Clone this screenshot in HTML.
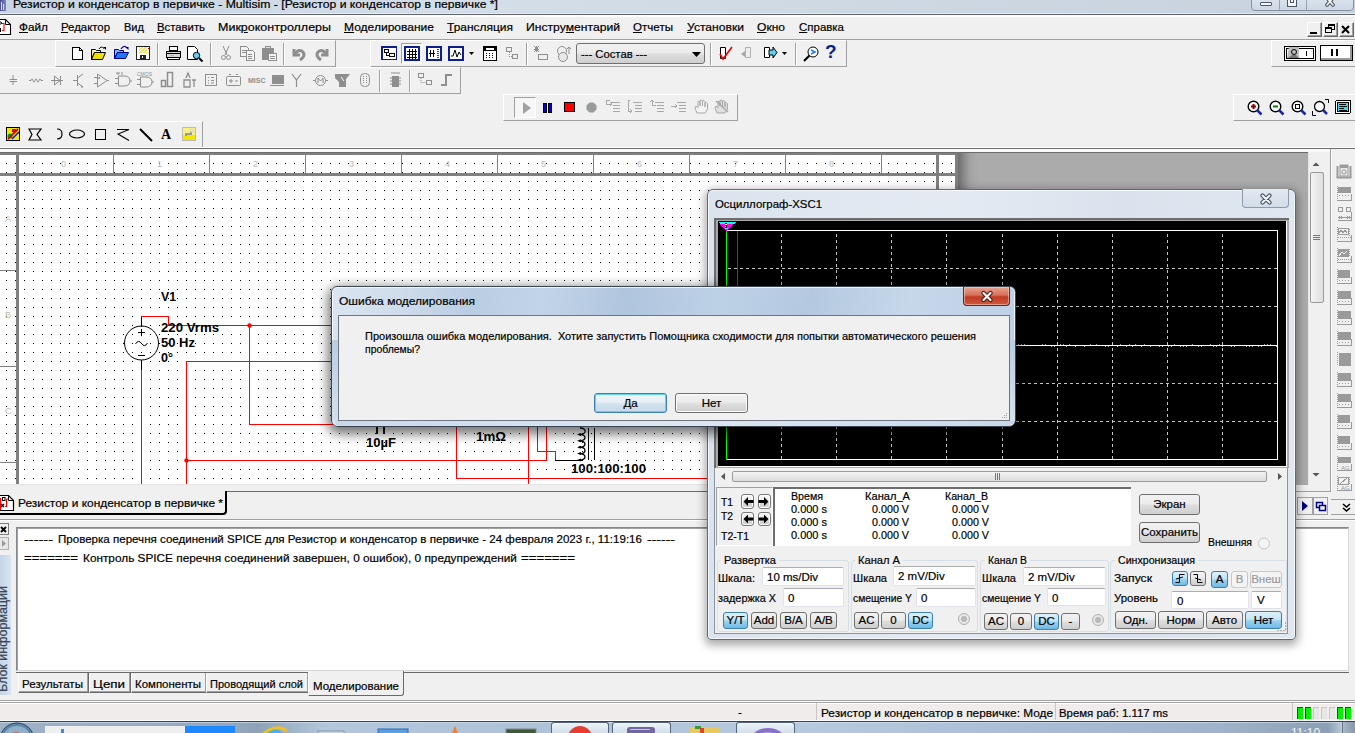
<!DOCTYPE html><html><head><meta charset="utf-8"><style>
*{margin:0;padding:0;box-sizing:border-box}
html,body{width:1355px;height:733px;overflow:hidden;background:#f0f0f0;font-family:"Liberation Sans",sans-serif;font-size:11.5px;color:#000}
div{position:absolute}
.t{white-space:pre;line-height:14px;transform-origin:0 0;-webkit-text-stroke:0.2px currentColor}
u{text-decoration:underline;text-underline-offset:1px;text-decoration-thickness:1px}
svg{position:absolute;overflow:visible}
.b{font-weight:bold}
</style></head><body><div style="left:0px;top:0px;width:1355px;height:13px;background:linear-gradient(90deg,#c9d5e2 0%,#d4dee9 35%,#cfd9e4 60%,#c7d2de 100%)"></div>
<div style="left:0px;top:13px;width:1355px;height:1px;background:#e4eaf1"></div>
<div style="left:0px;top:14px;width:1355px;height:1px;background:#62676e"></div>
<div style="left:0px;top:15px;width:1355px;height:2px;background:#fcfcfc"></div>
<div class="t" style="left:13px;top:-3px;transform:scaleX(1.0607);">Резистор и конденсатор в первичке - Multisim - [Резистор и конденсатор в первичке *]</div>
<div style="left:0px;top:0px;width:6px;height:11px;background:linear-gradient(90deg,#4a4f90,#8088c8)"></div>
<div style="left:1px;top:2px;width:1px;height:8px;background:#d8dcf0"></div>
<div style="left:3px;top:4px;width:1px;height:6px;background:#d8dcf0"></div>
<div style="left:1251px;top:-6px;width:103px;height:17px;border:1px solid #8592a2;border-radius:0 0 4px 4px;background:linear-gradient(#dfe7f0,#cdd8e4)"></div>
<div style="left:1279px;top:0px;width:1px;height:10px;background:#96a2b0"></div>
<div style="left:1306px;top:0px;width:1px;height:10px;background:#96a2b0"></div>
<div style="left:1260px;top:2px;width:12px;height:4px;border:1px solid #4c5666;background:#f4f6f8;border-radius:1px"></div>
<div style="left:1287px;top:0px;width:10px;height:7px;border:1px solid #4c5666;background:#f4f6f8;border-top:none"></div>
<div style="left:1290px;top:0px;width:4px;height:3px;border:1px solid #4c5666;border-top:none"></div>
<svg style="left:1322px;top:-2px" width="16" height="10"><path d="M4,-1 L8,3.5 L5,7 M12,-1 L8,3.5 L11,7" stroke="#4c5666" stroke-width="3.6" fill="none" stroke-linecap="round"/><path d="M4,-1 L8,3.5 L5,7 M12,-1 L8,3.5 L11,7" stroke="#f4f6f8" stroke-width="1.6" fill="none" stroke-linecap="round"/></svg>
<div class="t" style="left:19px;top:20px;transform:scaleX(1.0254);"><u>Ф</u>айл</div>
<div class="t" style="left:61px;top:20px;transform:scaleX(0.9896);"><u>Р</u>едактор</div>
<div class="t" style="left:124px;top:20px;transform:scaleX(0.9610);">Вид</div>
<div class="t" style="left:157px;top:20px;transform:scaleX(0.9846);"><u>В</u>ставить</div>
<div class="t" style="left:218px;top:20px;transform:scaleX(1.0862);">Мик<u>р</u>оконтроллеры</div>
<div class="t" style="left:344px;top:20px;transform:scaleX(1.0458);"><u>М</u>оделирование</div>
<div class="t" style="left:447px;top:20px;transform:scaleX(1.0401);"><u>Т</u>рансляция</div>
<div class="t" style="left:526px;top:20px;transform:scaleX(1.0567);">Инстру<u>м</u>ентарий</div>
<div class="t" style="left:633px;top:20px;transform:scaleX(1.0059);"><u>О</u>тчеты</div>
<div class="t" style="left:687px;top:20px;transform:scaleX(1.0528);"><u>У</u>становки</div>
<div class="t" style="left:757px;top:20px;transform:scaleX(1.0473);"><u>О</u>кно</div>
<div class="t" style="left:799px;top:20px;transform:scaleX(0.9972);"><u>С</u>правка</div>
<svg style="left:0;top:19px" width="12" height="17"><path d="M-2,0.5 H5.5 L10.5,5.5 V15.5 H-2" fill="#fff" stroke="#000" stroke-width="1.1"/><path d="M5.5,0.5 V5.5 H10.5" fill="none" stroke="#000"/><path d="M2,4.5 H4 V11.5 H2" stroke="#f00" stroke-width="1.1" fill="none"/><path d="M-1,2 L2,4 L-1,6" stroke="#000" fill="none"/><rect x="-1" y="9" width="2" height="4" fill="#000"/></svg>
<div style="left:1307px;top:22px;width:15px;height:15px;background:#f0f0f0;border-top:1px solid #fff;border-left:1px solid #fff;border-right:1px solid #696969;border-bottom:1px solid #696969;box-shadow:inset -1px -1px 0 #a0a0a0"></div>
<div style="left:1323px;top:22px;width:15px;height:15px;background:#f0f0f0;border-top:1px solid #fff;border-left:1px solid #fff;border-right:1px solid #696969;border-bottom:1px solid #696969;box-shadow:inset -1px -1px 0 #a0a0a0"></div>
<div style="left:1339px;top:22px;width:15px;height:15px;background:#f0f0f0;border-top:1px solid #fff;border-left:1px solid #fff;border-right:1px solid #696969;border-bottom:1px solid #696969;box-shadow:inset -1px -1px 0 #a0a0a0"></div>
<div style="left:1310px;top:32px;width:7px;height:2px;background:#000"></div>
<svg style="left:1325px;top:24px" width="12" height="11"><rect x="3.5" y="0.5" width="6" height="5" fill="none" stroke="#000"/><rect x="3.5" y="1" width="6" height="1" fill="#000"/><rect x="0.5" y="3.5" width="6" height="5" fill="#f0f0f0" stroke="#000"/><rect x="0.5" y="4" width="6" height="1" fill="#000"/></svg>
<svg style="left:1341px;top:25px" width="10" height="9"><path d="M1,1 L8,8 M8,1 L1,8" stroke="#000" stroke-width="2"/></svg>
<div style="left:0px;top:39px;width:1355px;height:1px;background:#a0a0a0"></div>
<div style="left:55px;top:40px;width:281px;height:27px;border-top:1px solid #fff;border-left:1px solid #fff;border-bottom:1px solid #a0a0a0;border-right:1px solid #a0a0a0"></div>
<div style="left:370px;top:40px;width:477px;height:27px;border-top:1px solid #fff;border-left:1px solid #fff;border-bottom:1px solid #a0a0a0;border-right:1px solid #a0a0a0"></div>
<div style="left:1271px;top:40px;width:90px;height:27px;border-top:1px solid #fff;border-left:1px solid #fff;border-bottom:1px solid #a0a0a0;border-right:1px solid #a0a0a0"></div>
<div style="left:-2px;top:67px;width:463px;height:27px;border-top:1px solid #fff;border-left:1px solid #fff;border-bottom:1px solid #a0a0a0;border-right:1px solid #a0a0a0"></div>
<div style="left:503px;top:94px;width:235px;height:27px;border-top:1px solid #fff;border-left:1px solid #fff;border-bottom:1px solid #a0a0a0;border-right:1px solid #a0a0a0"></div>
<div style="left:1233px;top:94px;width:130px;height:27px;border-top:1px solid #fff;border-left:1px solid #fff;border-bottom:1px solid #a0a0a0;border-right:1px solid #a0a0a0"></div>
<div style="left:-2px;top:121px;width:205px;height:27px;border-top:1px solid #fff;border-left:1px solid #fff;border-bottom:1px solid #a0a0a0;border-right:1px solid #a0a0a0"></div>
<div style="left:157px;top:43px;width:1px;height:22px;background:#a0a0a0"></div>
<div style="left:158px;top:43px;width:1px;height:22px;background:#fff"></div>
<div style="left:210px;top:43px;width:1px;height:22px;background:#a0a0a0"></div>
<div style="left:211px;top:43px;width:1px;height:22px;background:#fff"></div>
<div style="left:283px;top:43px;width:1px;height:22px;background:#a0a0a0"></div>
<div style="left:284px;top:43px;width:1px;height:22px;background:#fff"></div>
<div style="left:526px;top:43px;width:1px;height:22px;background:#a0a0a0"></div>
<div style="left:527px;top:43px;width:1px;height:22px;background:#fff"></div>
<div style="left:710px;top:43px;width:1px;height:22px;background:#a0a0a0"></div>
<div style="left:711px;top:43px;width:1px;height:22px;background:#fff"></div>
<div style="left:795px;top:43px;width:1px;height:22px;background:#a0a0a0"></div>
<div style="left:796px;top:43px;width:1px;height:22px;background:#fff"></div>
<div style="left:379px;top:70px;width:1px;height:22px;background:#a0a0a0"></div>
<div style="left:380px;top:70px;width:1px;height:22px;background:#fff"></div>
<div style="left:409px;top:70px;width:1px;height:22px;background:#a0a0a0"></div>
<div style="left:410px;top:70px;width:1px;height:22px;background:#fff"></div>
<svg style="left:72px;top:47px" width="12" height="14" shape-rendering="crispEdges"><path d="M0.5,0.5 H7.5 L10.5,3.5 V12.5 H0.5 Z" fill="#fff" stroke="#000"/><path d="M7.5,0.5 V3.5 H10.5" fill="none" stroke="#000"/></svg>
<svg style="left:91px;top:46px" width="17" height="15"><path d="M0.5,3.5 H4.5 L5.5,4.5 H9.5 V6.5 H3.5 L0.5,13.5 Z" fill="#fff7a0" stroke="#000"/><path d="M0.5,13.5 L3.5,6.5 H14.5 L11.5,13.5 Z" fill="#f0e000" stroke="#000"/><path d="M8,3 Q10,-0.5 13,2.5" fill="none" stroke="#000"/><path d="M12,1 H15 V4 Z" fill="#000"/></svg>
<svg style="left:114px;top:45px" width="16" height="15"><path d="M0.5,4.5 H4.5 L5.5,5.5 H9.5 V7.5 H3.5 L0.5,13.5 Z" fill="#7fb4f5" stroke="#00008b"/><path d="M0.5,13.5 L3.5,7.5 H14.5 L11.5,13.5 Z" fill="#1e78f0" stroke="#00008b"/><path d="M7,4 Q10,-0.5 13,3" fill="none" stroke="#00008b" stroke-width="1.2"/><path d="M11.5,2 H14.5 V5 Z" fill="#00008b"/></svg>
<svg style="left:136px;top:46px" width="15" height="15" shape-rendering="crispEdges"><rect x="0.5" y="0.5" width="13" height="13" fill="#fff" stroke="#222"/><rect x="3" y="1" width="8" height="6" fill="#f4ea3a"/><path d="M3,3 L5,1 M3,6 L8,1 M6,7 L11,2 M9,7 L11,5" stroke="#fff"/><rect x="4" y="9" width="6" height="4" fill="#222"/><rect x="6" y="10" width="1" height="2" fill="#fff"/><rect x="12" y="2" width="1" height="1" fill="#e00"/></svg>
<svg style="left:165px;top:46px" width="17" height="15" shape-rendering="crispEdges"><path d="M4.5,0.5 H12.5 V4.5 H4.5 Z" fill="#fff" stroke="#000"/><path d="M1.5,5.5 H15.5 V11.5 H1.5 Z" fill="#d8d8d8" stroke="#000"/><rect x="1" y="7" width="15" height="1" fill="#000"/><rect x="5" y="9" width="4" height="1" fill="#e0c000"/><path d="M2.5,11.5 V13.5 H14.5 V11.5" fill="#fff" stroke="#000"/></svg>
<svg style="left:187px;top:46px" width="17" height="16"><path d="M0.5,0.5 H7.5 L10.5,3.5 V13.5 H0.5 Z" fill="#fff" stroke="#000"/><circle cx="9.5" cy="9.5" r="3.2" fill="#5fd0f0" stroke="#000"/><path d="M12,12 L15.5,15.5" stroke="#000" stroke-width="2"/></svg>
<svg style="left:221px;top:46px" width="10" height="15"><path d="M2,0 L6,9 M8,0 L4,9" stroke="#8e8e8e"/><circle cx="2.5" cy="11.5" r="2" fill="none" stroke="#8e8e8e"/><circle cx="7.5" cy="11.5" r="2" fill="none" stroke="#8e8e8e"/></svg>
<svg style="left:240px;top:46px" width="16" height="15" shape-rendering="crispEdges"><path d="M0.5,0.5 H6.5 L8.5,2.5 V10.5 H0.5 Z" fill="#f4f4f4" stroke="#8e8e8e"/><path d="M6.5,4.5 H12.5 L14.5,6.5 V14.5 H6.5 Z" fill="#f4f4f4" stroke="#8e8e8e"/><path d="M2,4 H6 M2,6 H6 M8,8 H12 M8,10 H12 M8,12 H12" stroke="#8e8e8e"/></svg>
<svg style="left:262px;top:46px" width="16" height="15" shape-rendering="crispEdges"><rect x="0" y="2" width="12" height="12" fill="#8e8e8e"/><rect x="3" y="0" width="6" height="3" fill="#8e8e8e"/><rect x="4" y="1" width="4" height="1" fill="#ddd"/><rect x="6.5" y="7.5" width="8" height="7" fill="#f4f4f4" stroke="#8e8e8e"/><path d="M8,10 H13 M8,12 H13" stroke="#8e8e8e"/></svg>
<svg style="left:291px;top:47px" width="16" height="14"><path d="M3,2 V8 H9" fill="none" stroke="#8e8e8e" stroke-width="3"/><path d="M4,7 Q8,1 12,5 Q15,9 9,13" fill="none" stroke="#8e8e8e" stroke-width="3"/></svg>
<svg style="left:314px;top:47px" width="16" height="14"><path d="M13,2 V8 H7" fill="none" stroke="#8e8e8e" stroke-width="3"/><path d="M12,7 Q8,1 4,5 Q1,9 7,13" fill="none" stroke="#8e8e8e" stroke-width="3"/></svg>
<svg style="left:381px;top:46px" width="16" height="15" shape-rendering="crispEdges"><rect x="0.5" y="0.5" width="15" height="13" fill="#fff" stroke="#0a1e8c" stroke-width="1"/><rect x="1" y="1" width="14" height="12" fill="none" stroke="#0a1e8c" stroke-width="1"/><rect x="3.5" y="3.5" width="4" height="3" fill="#fff" stroke="#000"/><rect x="8.5" y="7.5" width="5" height="3" fill="#fff" stroke="#000"/><path d="M5.5,6.5 V9.5 H8.5" stroke="#000" fill="none"/></svg>
<div style="left:401px;top:43px;width:21px;height:21px;border:1px solid #a0a0a0;border-right-color:#fff;border-bottom-color:#fff;background:#f6f6f6"></div>
<svg style="left:404px;top:46px" width="16" height="15" shape-rendering="crispEdges"><rect x="0.5" y="0.5" width="15" height="14" fill="#fff" stroke="#0a1e8c"/><rect x="1.5" y="1.5" width="13" height="12" fill="none" stroke="#0a1e8c"/><path d="M3,5.5 H13 M3,8.5 H13 M3,11.5 H13 M5.5,3 V13 M8.5,3 V13 M11.5,3 V13" stroke="#000"/></svg>
<svg style="left:426px;top:46px" width="16" height="15" shape-rendering="crispEdges"><rect x="0.5" y="0.5" width="15" height="14" fill="#fff" stroke="#0a1e8c"/><rect x="1.5" y="1.5" width="13" height="12" fill="none" stroke="#0a1e8c"/><path d="M4.5,4 V11 M7.5,4 V11 M3,7.5 H9" stroke="#000"/><path d="M11,3.5 H13 M11,5.5 H13 M11,7.5 H13 M11,9.5 H13 M11,11.5 H13" stroke="#e00"/></svg>
<svg style="left:448px;top:46px" width="16" height="15"><rect x="0.5" y="0.5" width="15" height="14" fill="#fff" stroke="#0a1e8c"/><rect x="1.5" y="1.5" width="13" height="12" fill="none" stroke="#0a1e8c"/><path d="M3,10 L5,10 L7,4 L9,11 L11,6 L13,9" stroke="#000" fill="none"/></svg>
<svg style="left:469px;top:52px" width="6" height="4"><path d="M0,0 H5 L2.5,3 Z" fill="#000"/></svg>
<svg style="left:483px;top:46px" width="15" height="15" shape-rendering="crispEdges"><rect x="0.5" y="0.5" width="13" height="14" fill="#fff" stroke="#000"/><rect x="1" y="1" width="12" height="4" fill="#000"/><rect x="3" y="2" width="8" height="2" fill="#fff"/><path d="M3,7.5 H4 M6,7.5 H7 M9,7.5 H10 M3,9.5 H4 M6,9.5 H7 M9,9.5 H10 M3,11.5 H4 M6,11.5 H7 M9,11.5 H10" stroke="#000"/></svg>
<svg style="left:506px;top:47px" width="13" height="13" shape-rendering="crispEdges"><rect x="0.5" y="0.5" width="5" height="4" fill="none" stroke="#8e8e8e"/><rect x="6.5" y="7.5" width="5" height="4" fill="none" stroke="#8e8e8e"/><path d="M3,5 V9 H6" stroke="#8e8e8e" fill="none" stroke-dasharray="1,1"/></svg>
<svg style="left:533px;top:46px" width="16" height="15" shape-rendering="crispEdges"><path d="M1,3 H6 M3.5,0 V6 M1,0 L6,6 M6,0 L1,6" stroke="#8e8e8e"/><rect x="5.5" y="8.5" width="9" height="5" fill="none" stroke="#8e8e8e"/></svg>
<svg style="left:556px;top:46px" width="17" height="16"><circle cx="6" cy="5" r="4.5" fill="none" stroke="#8e8e8e"/><circle cx="7" cy="11" r="4.5" fill="#e8e8e8" stroke="#8e8e8e"/><path d="M13,1 V8 M11,3 L13,1 L15,3" stroke="#8e8e8e" fill="none"/></svg>
<div style="left:576px;top:43px;width:129px;height:21px;border:1px solid #707070;border-radius:3px;background:linear-gradient(#f2f2f2 0%,#ebebeb 45%,#dddddd 55%,#cfcfcf 100%)"></div>
<div class="t" style="left:581px;top:47px;transform:scaleX(0.9782);">--- Состав ---</div>
<svg style="left:692px;top:52px" width="9" height="5"><path d="M0,0 H9 L4.5,5 Z" fill="#000"/></svg>
<svg style="left:718px;top:45px" width="16" height="17"><path d="M2.5,2.5 H7.5 V13.5 H2.5 Z" fill="#fff" stroke="#000"/><path d="M2,9 L5,14 L14,2" stroke="#e00" stroke-width="1.6" fill="none"/></svg>
<svg style="left:741px;top:47px" width="10" height="12"><path d="M4.5,0.5 H9.5 V10.5 H4.5 Z" fill="#eee" stroke="#b0b0b0"/><path d="M0,7 L4,4 V10 Z" fill="#a8a8a8"/></svg>
<svg style="left:764px;top:47px" width="14" height="12"><path d="M0.5,0.5 H5.5 V10.5 H0.5 Z" fill="#fff" stroke="#000"/><path d="M5,3 H9 V0 L13,5.5 L9,11 V8 H5 Z" fill="#5fd0f0" stroke="#000"/></svg>
<svg style="left:782px;top:52px" width="6" height="4"><path d="M0,0 H5 L2.5,3 Z" fill="#000"/></svg>
<svg style="left:803px;top:46px" width="16" height="16"><circle cx="10" cy="6" r="5" fill="#fff" stroke="#000"/><path d="M8,4 L12,6 L8,8" stroke="#1e78f0" fill="none" stroke-width="1.5"/><path d="M6.5,9.5 L1,15" stroke="#000" stroke-width="2.2"/></svg>
<div style="left:825px;top:41px;font:bold 19px/22px Liberation Sans;color:#0a1e8c">?</div>
<svg style="left:1284px;top:46px" width="32" height="15"><rect x="0.5" y="0.5" width="31" height="14" fill="#fff" stroke="#000"/><rect x="2.5" y="2.5" width="27" height="10" fill="none" stroke="#000"/><path d="M3,12 L5,1 H15 V12 Z" fill="#bdbdbd"/><circle cx="10" cy="6" r="2.5" fill="none" stroke="#000"/><path d="M4,12 L8,9 H12 L15,12 Z" fill="#777"/><rect x="22" y="5" width="1" height="5" fill="#000"/></svg>
<div style="left:1320px;top:45px;width:33px;height:16px;border:1px solid #000;background:#fff;box-shadow:inset -2px -2px 0 #9a9a9a"></div>
<div style="left:1331px;top:49px;width:2px;height:7px;background:#000"></div>
<div style="left:1336px;top:49px;width:2px;height:7px;background:#000"></div>
<svg style="left:9px;top:72px" width="17" height="17"><path d="M4,3 V7 M0.5,7.5 H8 M0.5,9.5 H8 M4,10 V13" stroke="#8e8e8e"/></svg>
<svg style="left:29px;top:72px" width="17" height="17"><path d="M0,8.5 H2 Q3,5 4,8.5 T6,8.5 T8,8.5 T10,8.5 T12,8.5 H14" stroke="#8e8e8e" fill="none" stroke-width="1"/></svg>
<svg style="left:51px;top:72px" width="17" height="17"><path d="M0,8.5 H12 M3.5,4 L9,8.5 L3.5,13 Z M9.5,4 V13" stroke="#8e8e8e" fill="none"/></svg>
<svg style="left:73px;top:72px" width="17" height="17"><path d="M0,8.5 H4 M4.5,3 V14 M4.5,6 L10,2 M4.5,11 L10,15 M8,13 L10,15 L8,15" stroke="#8e8e8e" fill="none"/></svg>
<svg style="left:94px;top:72px" width="17" height="17"><path d="M0,5.5 H3 M0,11.5 H3 M3.5,2 V15 L13,8.5 Z M13,8.5 H15 M5,5 V7 M4,6 H6" stroke="#8e8e8e" fill="none"/></svg>
<svg style="left:115px;top:72px" width="18" height="17"><path d="M3.5,4 H9 Q15,4 15,9 Q15,14 9,14 H3.5 Z M0,6.5 H3 M0,11.5 H3 M15,9 H17 M1,1 H5 M3,1 V3 M7,0 V3" stroke="#8e8e8e" fill="none"/></svg>
<svg style="left:137px;top:72px" width="18" height="17"><path d="M3.5,5 H9 Q15,5 15,10 Q15,15 9,15 H3.5 Z M0,7.5 H3 M0,12.5 H3 M15,10 H17" stroke="#8e8e8e" fill="none"/><text x="0" y="4" font-size="5" fill="#8e8e8e" font-family="Liberation Sans">CMOS</text></svg>
<svg style="left:161px;top:72px" width="13" height="17"><path d="M6.5,0.5 H11.5 V14.5 H6.5 Z M0.5,8.5 H4.5 V14.5 H0.5 Z" fill="none" stroke="#8e8e8e" stroke-width="1.5"/></svg>
<svg style="left:182px;top:72px" width="15" height="17"><path d="M4,6 L6,1 L8,6 M2,8 H8 V15 H2 Z M10,8 H14 M12,8 V15" stroke="#8e8e8e" fill="none" stroke-width="1.3"/></svg>
<svg style="left:205px;top:72px" width="12" height="17"><rect x="0.5" y="2.5" width="11" height="11" fill="none" stroke="#8e8e8e"/><path d="M3,5.5 H4 M3,8.5 H4 M3,11 H4 M6,5.5 H9 M6,8.5 H9 M6,11 H9" stroke="#8e8e8e"/></svg>
<svg style="left:226px;top:72px" width="16" height="17"><rect x="0.5" y="4.5" width="14" height="9" rx="1" fill="none" stroke="#8e8e8e"/><path d="M3,2.5 H5 M10,2.5 H12 M3,9 H7 M5,7 V11 M9,9 H12" stroke="#8e8e8e"/></svg>
<div style="left:248px;top:76px;font:bold 7px/9px Liberation Sans;color:#8e8e8e;letter-spacing:0px">MISC</div>
<svg style="left:270px;top:72px" width="15" height="17"><rect x="2" y="3" width="12" height="9" fill="#8e8e8e"/><path d="M0,13.5 H14" stroke="#8e8e8e"/></svg>
<svg style="left:292px;top:72px" width="10" height="17"><path d="M4.5,8 V15 M0,2 L4.5,8 L9,2" stroke="#8e8e8e" fill="none" stroke-width="1.2"/></svg>
<svg style="left:313px;top:72px" width="16" height="17"><circle cx="7.5" cy="8.5" r="5" fill="none" stroke="#8e8e8e"/><path d="M0,8.5 H2.5 M12.5,8.5 H15 M5,11 V6 L7.5,9 L10,6 V11" stroke="#8e8e8e" fill="none"/></svg>
<svg style="left:335px;top:72px" width="16" height="17"><path d="M0,2 H15 L11,7 V15 H4 V10 L0,6 Z" fill="#8e8e8e"/><path d="M6,5 L9,9" stroke="#fff"/></svg>
<svg style="left:359px;top:72px" width="12" height="17"><rect x="1.5" y="1.5" width="9" height="13" rx="4" fill="none" stroke="#8e8e8e"/><path d="M4.5,4 V12 M7.5,4 V12" stroke="#8e8e8e" stroke-dasharray="1,1"/></svg>
<svg style="left:390px;top:72px" width="12" height="17"><rect x="2" y="4" width="7" height="11" fill="#8e8e8e"/><path d="M0,6 H11 M0,9 H11 M0,12 H11 M1,1 H10" stroke="#8e8e8e"/></svg>
<svg style="left:418px;top:72px" width="15" height="17"><rect x="0.5" y="1.5" width="5" height="4" fill="none" stroke="#8e8e8e"/><rect x="8.5" y="8.5" width="5" height="4" fill="none" stroke="#8e8e8e"/><path d="M3,6 V10.5 H8" stroke="#8e8e8e" stroke-dasharray="1,1" fill="none"/></svg>
<svg style="left:441px;top:72px" width="12" height="17"><path d="M0,13 H5 V3 H11" stroke="#8e8e8e" stroke-width="2" fill="none"/></svg>
<div style="left:514px;top:97px;width:22px;height:21px;border:1px solid #a0a0a0;border-right-color:#fff;border-bottom-color:#fff;background:#f6f6f6"></div>
<svg style="left:522px;top:102px" width="10" height="13"><path d="M1,0 L9,6 L1,12 Z" fill="#a0a0a0"/></svg>
<svg style="left:543px;top:103px" width="9" height="10" shape-rendering="crispEdges"><rect x="0.5" y="0.5" width="3" height="9" fill="#0000e0" stroke="#000"/><rect x="5.5" y="0.5" width="3" height="9" fill="#0000e0" stroke="#000"/></svg>
<svg style="left:564px;top:102px" width="11" height="11" shape-rendering="crispEdges"><rect x="0.5" y="0.5" width="10" height="9" fill="#f00" stroke="#000"/></svg>
<svg style="left:586px;top:102px" width="11" height="11"><path d="M3.5,0.5 H7.5 L10.5,3.5 V7.5 L7.5,10.5 H3.5 L0.5,7.5 V3.5 Z" fill="#9a9a9a"/></svg>
<svg style="left:605px;top:99px" width="16" height="15" shape-rendering="crispEdges"><path d="M6,3.5 H15 M8,6.5 H15 M8,9.5 H15 M8,12.5 H15" stroke="#a8a8a8"/><path d="M1,1 H5 M1,1 V5 H7 M5,3 L7,5 L5,7" stroke="#a8a8a8" fill="none"/></svg>
<svg style="left:627px;top:99px" width="16" height="15" shape-rendering="crispEdges"><path d="M6,3.5 H15 M8,6.5 H15 M8,9.5 H15 M8,12.5 H15" stroke="#a8a8a8"/><path d="M3,1 H1 V12 H5 M3,10 L5,12 L3,14" stroke="#a8a8a8" fill="none"/></svg>
<svg style="left:649px;top:99px" width="16" height="15" shape-rendering="crispEdges"><path d="M6,3.5 H15 M8,6.5 H15 M8,9.5 H15 M8,12.5 H15" stroke="#a8a8a8"/><path d="M3,1 V6 H7 M1,3 L3,1 L5,3" stroke="#a8a8a8" fill="none"/></svg>
<svg style="left:671px;top:99px" width="16" height="15" shape-rendering="crispEdges"><path d="M6,3.5 H15 M8,6.5 H15 M8,9.5 H15 M8,12.5 H15" stroke="#a8a8a8"/><path d="M0,7 H6 M4,5 L6,7 L4,9" stroke="#a8a8a8" fill="none"/></svg>
<svg style="left:694px;top:99px" width="15" height="16"><path d="M3,14 L1,9 L2,7 L4,9 V3 L5,2 L6,3 V7 V1.5 L7.5,1 L8.5,2 V7 V2 L10,1.5 L11,2.5 V8 V4 L12.5,3.5 L13.5,4.5 V10 L11,14 Z" fill="#f4f4f4" stroke="#a8a8a8"/></svg>
<svg style="left:714px;top:99px" width="17" height="16"><path d="M3,14 L1,9 L2,7 L4,9 V3 L5,2 L6,3 V7 V1.5 L7.5,1 L8.5,2 V7 V2 L10,1.5 L11,2.5 V8 V4 L12.5,3.5 L13.5,4.5 V10 L11,14 Z" fill="#e0e0e0" stroke="#a8a8a8"/><path d="M2,2 L14,13" stroke="#a8a8a8" stroke-width="1.5"/></svg>
<svg style="left:1247px;top:100px" width="17" height="17"><circle cx="6.5" cy="6.5" r="5.3" fill="#fff" stroke="#000" stroke-width="1.4"/><path d="M4,6.5 H9 M6.5,4 V9" stroke="#8b0000" stroke-width="2"/><path d="M10,10 L14.5,14.5" stroke="#1a2a9a" stroke-width="2.5"/></svg>
<svg style="left:1269px;top:100px" width="17" height="17"><circle cx="6.5" cy="6.5" r="5.3" fill="#fff" stroke="#000" stroke-width="1.4"/><path d="M4,6.5 H9" stroke="#008000" stroke-width="2"/><path d="M10,10 L14.5,14.5" stroke="#1a2a9a" stroke-width="2.5"/></svg>
<svg style="left:1291px;top:100px" width="17" height="17"><circle cx="6.5" cy="6.5" r="5.3" fill="#fff" stroke="#000" stroke-width="1.4"/><rect x="4.5" y="4.5" width="4" height="4" fill="none" stroke="#000"/><path d="M10,10 L14.5,14.5" stroke="#1a2a9a" stroke-width="2.5"/></svg>
<svg style="left:1312px;top:99px" width="17" height="17"><circle cx="7.5" cy="7.5" r="5" fill="#fff" stroke="#000" stroke-width="1.3"/><path d="M11,11 L15,15" stroke="#1a2a9a" stroke-width="2.5"/><path d="M0.5,12 V16.5 H4 M13,0.5 H16.5 V4" stroke="#000" fill="none"/></svg>
<svg style="left:1335px;top:100px" width="16" height="14" shape-rendering="crispEdges"><rect x="0.5" y="0.5" width="15" height="13" rx="1.5" fill="#fff" stroke="#000"/><rect x="2" y="2" width="12" height="10" fill="#000"/><rect x="3" y="3" width="10" height="8" fill="#30e0f0"/><path d="M4,4.5 H11 M4,6.5 H12 M4,8.5 H9 M4,10 H12" stroke="#000"/></svg>
<svg style="left:6px;top:127px" width="15" height="15"><rect x="0.5" y="0.5" width="13" height="13" fill="#f4ea00" stroke="#000"/><circle cx="4" cy="9" r="2.5" fill="#00a000"/><path d="M2,12 L12,2" stroke="#e00000" stroke-width="2"/><path d="M6,12 L13,5" stroke="#1010e0" stroke-width="1.5"/><rect x="6" y="2" width="4" height="3" fill="#e00000"/></svg>
<svg style="left:28px;top:128px" width="14" height="13"><path d="M1,1 H13 L9,6.5 L13,12 H1 L4,6.5 Z" fill="none" stroke="#000" stroke-width="1.2"/></svg>
<svg style="left:56px;top:128px" width="7" height="12"><path d="M1,1 Q6,1 6,6 Q6,11 1,11" fill="none" stroke="#000" stroke-width="1.2"/></svg>
<svg style="left:69px;top:129px" width="17" height="10"><ellipse cx="8" cy="5" rx="7.5" ry="4" fill="none" stroke="#000" stroke-width="1.2"/></svg>
<svg style="left:95px;top:129px" width="12" height="12" shape-rendering="crispEdges"><rect x="0.5" y="0.5" width="10" height="10" fill="none" stroke="#000"/></svg>
<svg style="left:116px;top:128px" width="15" height="14"><path d="M1,1.5 H13 L2,6 L13,12.5" fill="none" stroke="#000" stroke-width="1.1"/></svg>
<svg style="left:139px;top:128px" width="14" height="14"><path d="M1,1 L13,13" stroke="#000" stroke-width="2"/></svg>
<div style="left:161px;top:127px;font:bold 14px/15px Liberation Serif;color:#000">A</div>
<svg style="left:182px;top:127px" width="14" height="15"><rect x="0.5" y="0.5" width="13" height="13" fill="#f8f080" stroke="#bbb"/><rect x="1" y="8" width="12" height="5" fill="#f0e800"/><path d="M4,9 V7 H9 V4" stroke="#999" stroke-width="2" fill="none"/><circle cx="10" cy="3.5" r="2" fill="#ddd"/></svg>
<div style="left:0px;top:147px;width:1355px;height:1px;background:#fff"></div>
<div style="left:0px;top:148px;width:1355px;height:1px;background:#6d6d6d"></div>
<div style="left:0px;top:149px;width:1330px;height:3px;background:#f8f8f8"></div>
<div style="left:0px;top:152px;width:1308px;height:1px;background:#6d6d6d"></div>
<div style="left:958px;top:153px;width:350px;height:332px;background:linear-gradient(90deg,#6e6e6e 0px,#8a8a8a 6px,#a2a2a2 12px,#ababab 20px,#ababab 100%)"></div>
<div style="left:0px;top:153px;width:958px;height:332px;background:#fff"></div>
<div style="left:0px;top:153px;width:958px;height:2px;background:#808080"></div>
<div style="left:955px;top:153px;width:3px;height:332px;background:#808080"></div>
<div style="left:0px;top:173px;width:958px;height:3px;background:#808080"></div>
<div style="left:16px;top:153px;width:3px;height:332px;background:#808080"></div>
<div style="left:936px;top:153px;width:3px;height:332px;background:#808080"></div>
<div style="left:113px;top:155px;width:1px;height:18px;background:#808080"></div>
<div style="left:209px;top:155px;width:1px;height:18px;background:#808080"></div>
<div style="left:305px;top:155px;width:1px;height:18px;background:#808080"></div>
<div style="left:401px;top:155px;width:1px;height:18px;background:#808080"></div>
<div style="left:497px;top:155px;width:1px;height:18px;background:#808080"></div>
<div style="left:593px;top:155px;width:1px;height:18px;background:#808080"></div>
<div style="left:689px;top:155px;width:1px;height:18px;background:#808080"></div>
<div style="left:785px;top:155px;width:1px;height:18px;background:#808080"></div>
<div style="left:881px;top:155px;width:1px;height:18px;background:#808080"></div>
<div style="left:0px;top:270px;width:16px;height:1px;background:#808080"></div>
<div style="left:0px;top:366px;width:16px;height:1px;background:#808080"></div>
<div style="left:0px;top:462px;width:16px;height:1px;background:#808080"></div>
<svg style="left:0;top:153px" width="955" height="332" shape-rendering="crispEdges"><defs><pattern id="dp" width="9" height="9" patternUnits="userSpaceOnUse" x="6" y="1"><rect x="0" y="0" width="1" height="1" fill="#000"/></pattern></defs><rect x="0" y="2" width="955" height="330" fill="url(#dp)"/></svg>
<div class="t" style="left:61px;top:158px;color:#b8b8b8;font-size:9px;line-height:12px;-webkit-text-stroke:0;">0</div>
<div class="t" style="left:157px;top:158px;color:#b8b8b8;font-size:9px;line-height:12px;-webkit-text-stroke:0;">1</div>
<div class="t" style="left:253px;top:158px;color:#b8b8b8;font-size:9px;line-height:12px;-webkit-text-stroke:0;">2</div>
<div class="t" style="left:349px;top:158px;color:#b8b8b8;font-size:9px;line-height:12px;-webkit-text-stroke:0;">3</div>
<div class="t" style="left:445px;top:158px;color:#b8b8b8;font-size:9px;line-height:12px;-webkit-text-stroke:0;">4</div>
<div class="t" style="left:541px;top:158px;color:#b8b8b8;font-size:9px;line-height:12px;-webkit-text-stroke:0;">5</div>
<div class="t" style="left:637px;top:158px;color:#b8b8b8;font-size:9px;line-height:12px;-webkit-text-stroke:0;">6</div>
<div class="t" style="left:733px;top:158px;color:#b8b8b8;font-size:9px;line-height:12px;-webkit-text-stroke:0;">7</div>
<div class="t" style="left:829px;top:158px;color:#b8b8b8;font-size:9px;line-height:12px;-webkit-text-stroke:0;">8</div>
<div class="t" style="left:5px;top:213px;color:#b8b8b8;font-size:9px;line-height:12px;-webkit-text-stroke:0;">A</div>
<div class="t" style="left:5px;top:309px;color:#b8b8b8;font-size:9px;line-height:12px;-webkit-text-stroke:0;">B</div>
<div class="t" style="left:5px;top:405px;color:#b8b8b8;font-size:9px;line-height:12px;-webkit-text-stroke:0;">C</div>
<div style="left:141px;top:316px;width:1px;height:11px;background:#000"></div>
<div style="left:141px;top:360px;width:1px;height:11px;background:#000"></div>
<div style="left:141px;top:316px;width:28px;height:1px;background:#ff0000"></div>
<div style="left:168px;top:316px;width:1px;height:10px;background:#ff0000"></div>
<div style="left:168px;top:325px;width:553px;height:1px;background:#ff0000"></div>
<div style="left:141px;top:370px;width:1px;height:115px;background:#ff0000"></div>
<div style="left:186px;top:361px;width:535px;height:1px;background:#ff0000"></div>
<div style="left:186px;top:361px;width:1px;height:124px;background:#ff0000"></div>
<div style="left:249px;top:325px;width:1px;height:100px;background:#ff0000"></div>
<div style="left:249px;top:424px;width:472px;height:1px;background:#ff0000"></div>
<div style="left:456px;top:478px;width:265px;height:1px;background:#ff0000"></div>
<div style="left:456px;top:400px;width:1px;height:79px;background:#ff0000"></div>
<div style="left:528px;top:400px;width:1px;height:85px;background:#ff0000"></div>
<div style="left:537px;top:400px;width:1px;height:52px;background:#ff0000"></div>
<div style="left:537px;top:451px;width:19px;height:1px;background:#ff0000"></div>
<div style="left:555px;top:451px;width:1px;height:10px;background:#ff0000"></div>
<div style="left:555px;top:460px;width:27px;height:1px;background:#000"></div>
<div style="left:546px;top:400px;width:1px;height:61px;background:#ff0000"></div>
<div style="left:186px;top:460px;width:361px;height:1px;background:#ff0000"></div>
<svg style="left:0;top:0" width="1" height="1"><circle cx="249.5" cy="325.5" r="2.2" fill="#f00"/><circle cx="186.5" cy="460.5" r="2.2" fill="#f00"/></svg>
<svg style="left:0;top:0" width="1" height="1"><circle cx="141.5" cy="343" r="17" fill="none" stroke="#000" stroke-width="1"/><path d="M138,332.5 H145 M141.5,329 V336 M138,355.5 H145" stroke="#000" stroke-width="1"/><path d="M135.5,344 Q138.5,339 141.5,343.5 T147.5,343" stroke="#000" fill="none" stroke-width="1"/></svg>
<div class="t" style="left:161px;top:290px;font-weight:bold;font-size:12px;-webkit-text-stroke:0;transform:scaleX(1.0213);">V1</div>
<div class="t" style="left:161px;top:321px;font-weight:bold;font-size:12px;-webkit-text-stroke:0;transform:scaleX(1.1002);">220 Vrms</div>
<div class="t" style="left:161px;top:336px;font-weight:bold;font-size:12px;-webkit-text-stroke:0;transform:scaleX(1.0842);">50 Hz</div>
<div class="t" style="left:161px;top:351px;font-weight:bold;font-size:12px;-webkit-text-stroke:0;transform:scaleX(1.0449);">0°</div>
<div class="t" style="left:366px;top:436px;font-weight:bold;font-size:12px;-webkit-text-stroke:0;transform:scaleX(1.0872);">10µF</div>
<div class="t" style="left:476px;top:430px;font-weight:bold;font-size:12px;-webkit-text-stroke:0;transform:scaleX(1.1124);">1mΩ</div>
<div class="t" style="left:571px;top:462px;font-weight:bold;font-size:12px;-webkit-text-stroke:0;transform:scaleX(1.1019);">100:100:100</div>
<div style="left:376px;top:427px;width:2px;height:7px;background:#111"></div>
<div style="left:383px;top:427px;width:2px;height:7px;background:#111"></div>
<svg style="left:0;top:0" width="1" height="1"><path d="M580,428 C587,428.0 587,434.4 579,434.4 C587,434.4 587,440.8 579,440.8 C587,440.8 587,447.2 579,447.2 C587,447.2 587,453.6 579,453.6 C587,453.6 587,460.0 579,460.0 " stroke="#000" fill="none" stroke-width="1.3"/><path d="M577,434.4 L581,432.9 L581,435.9 Z" fill="#000"/><path d="M577,440.8 L581,439.3 L581,442.3 Z" fill="#000"/><path d="M577,447.2 L581,445.7 L581,448.7 Z" fill="#000"/><path d="M577,453.6 L581,452.1 L581,455.1 Z" fill="#000"/><path d="M577,460.0 L581,458.5 L581,461.5 Z" fill="#000"/><rect x="588" y="428" width="1" height="32" fill="#000"/><rect x="594" y="428" width="1" height="32" fill="#000"/></svg>
<div style="left:1308px;top:153px;width:16px;height:332px;background:#f0f0f0;border-left:1px solid #e6e6e6"></div>
<div style="left:1310px;top:172px;width:14px;height:131px;border:1px solid #9a9a9a;border-radius:2px;background:linear-gradient(90deg,#f4f4f4,#dedede)"></div>
<svg style="left:0;top:0" width="1" height="1"><path d="M1312.5,166 L1316,162.5 L1319.5,166 Z" fill="#555"/><path d="M1312.5,473 L1316,476.5 L1319.5,473 Z" fill="#555"/><rect x="1313" y="235" width="7" height="1" fill="#777"/><rect x="1313" y="237" width="7" height="1" fill="#777"/><rect x="1313" y="239" width="7" height="1" fill="#777"/></svg>
<div style="left:1324px;top:153px;width:6px;height:338px;background:#f0f0f0"></div>
<div style="left:1330px;top:149px;width:1px;height:343px;background:#a0a0a0"></div>
<div style="left:1296px;top:491px;width:35px;height:1px;background:#a0a0a0"></div>
<div style="left:1331px;top:149px;width:1px;height:343px;background:#fff"></div>
<div style="left:0px;top:485px;width:1324px;height:6px;background:#f0f0f0"></div>
<div style="left:0px;top:484px;width:958px;height:1px;background:#e3e3e3"></div>
<div style="left:1296px;top:485px;width:28px;height:6px;background:#f0f0f0"></div>
<svg style="left:1336px;top:165px" width="16" height="15"><path d="M1.5,1 V12.5 H14.5 V1" fill="none" stroke="#9a9a9a" stroke-width="2"/><rect x="4" y="0" width="8" height="11" fill="#e8e8e8" stroke="#9a9a9a"/><rect x="4" y="0" width="8" height="3" fill="#9a9a9a"/><circle cx="8" cy="7" r="2.2" fill="none" stroke="#9a9a9a"/></svg>
<svg style="left:1336px;top:186px" width="16" height="15" shape-rendering="crispEdges"><path d="M1.5,0 V14" stroke="#9a9a9a" stroke-dasharray="1,1"/><path d="M1,14.5 H15.5 V8" fill="none" stroke="#9a9a9a"/><rect x="2" y="1" width="13" height="6" fill="#9a9a9a"/><path d="M3,9.5 H14" stroke="#9a9a9a" stroke-dasharray="1,2"/></svg>
<svg style="left:1336px;top:206px" width="16" height="15" shape-rendering="crispEdges"><rect x="2.5" y="1.5" width="4" height="4" fill="none" stroke="#9a9a9a"/><rect x="10.5" y="1.5" width="4" height="4" fill="none" stroke="#9a9a9a"/><path d="M2,11.5 H15 M2,14.5 H15.5 V6" stroke="#9a9a9a" fill="none"/><path d="M3,10 V13 M5,10 V13 M11,10 V13 M13,10 V13" stroke="#9a9a9a"/></svg>
<svg style="left:1336px;top:227px" width="16" height="15" shape-rendering="crispEdges"><path d="M1.5,0 V14" stroke="#9a9a9a" stroke-dasharray="1,1"/><path d="M1,14.5 H15.5 V8" fill="none" stroke="#9a9a9a"/><rect x="2.5" y="1.5" width="10" height="6" fill="none" stroke="#9a9a9a"/><path d="M3,6 L5,3 L7,6 L9,3 L11,6" stroke="#9a9a9a" fill="none"/><path d="M13,2 V9 M2,10.5 H15" stroke="#9a9a9a" stroke-dasharray="1,1"/></svg>
<svg style="left:1336px;top:248px" width="16" height="15" shape-rendering="crispEdges"><path d="M1.5,0 V14" stroke="#9a9a9a" stroke-dasharray="1,1"/><path d="M1,14.5 H15.5 V8" fill="none" stroke="#9a9a9a"/><rect x="2" y="1" width="11" height="8" fill="#9a9a9a"/><path d="M3,8 L6,4 L8,6 L11,3" stroke="#f0f0f0" fill="none"/><path d="M13.5,1 V9 M2,11.5 H15" stroke="#9a9a9a" stroke-dasharray="1,1"/></svg>
<svg style="left:1336px;top:269px" width="16" height="15" shape-rendering="crispEdges"><path d="M1.5,0 V14" stroke="#9a9a9a" stroke-dasharray="1,1"/><path d="M1,14.5 H15.5 V8" fill="none" stroke="#9a9a9a"/><rect x="2" y="1" width="12" height="8" fill="#9a9a9a"/><path d="M3,11.5 H14" stroke="#9a9a9a" stroke-dasharray="1,2"/></svg>
<svg style="left:1336px;top:290px" width="16" height="15" shape-rendering="crispEdges"><path d="M1.5,0 V14" stroke="#9a9a9a" stroke-dasharray="1,1"/><path d="M1,14.5 H15.5 V8" fill="none" stroke="#9a9a9a"/><rect x="2" y="1" width="13" height="8" fill="#9a9a9a"/><path d="M3,11.5 H14" stroke="#9a9a9a" stroke-dasharray="1,2"/></svg>
<svg style="left:1336px;top:310px" width="16" height="15" shape-rendering="crispEdges"><path d="M1.5,0 V14" stroke="#9a9a9a" stroke-dasharray="1,1"/><path d="M1,14.5 H15.5 V8" fill="none" stroke="#9a9a9a"/><rect x="2" y="1" width="13" height="8" fill="#9a9a9a"/><path d="M3,11.5 H14" stroke="#9a9a9a" stroke-dasharray="1,2"/></svg>
<svg style="left:1336px;top:331px" width="16" height="15" shape-rendering="crispEdges"><path d="M1.5,0 V14" stroke="#9a9a9a" stroke-dasharray="1,1"/><path d="M1,14.5 H15.5 V8" fill="none" stroke="#9a9a9a"/><rect x="2" y="1" width="13" height="8" fill="#9a9a9a"/><path d="M3,11.5 H14" stroke="#9a9a9a" stroke-dasharray="1,2"/></svg>
<svg style="left:1336px;top:352px" width="16" height="15" shape-rendering="crispEdges"><path d="M1.5,0 V14" stroke="#9a9a9a" stroke-dasharray="1,1"/><rect x="3" y="1" width="12" height="13" fill="#9a9a9a"/></svg>
<svg style="left:1336px;top:372px" width="16" height="15" shape-rendering="crispEdges"><path d="M1.5,0 V14" stroke="#9a9a9a" stroke-dasharray="1,1"/><path d="M1,14.5 H15.5 V8" fill="none" stroke="#9a9a9a"/><rect x="2" y="1" width="13" height="8" fill="#9a9a9a"/><path d="M3,11.5 H14" stroke="#9a9a9a" stroke-dasharray="1,2"/></svg>
<svg style="left:1336px;top:393px" width="16" height="15" shape-rendering="crispEdges"><path d="M1.5,0 V14" stroke="#9a9a9a" stroke-dasharray="1,1"/><path d="M1,14.5 H15.5 V8" fill="none" stroke="#9a9a9a"/><rect x="2" y="1" width="13" height="8" fill="#9a9a9a"/><path d="M3,11.5 H14" stroke="#9a9a9a" stroke-dasharray="1,2"/></svg>
<svg style="left:1336px;top:414px" width="16" height="15" shape-rendering="crispEdges"><path d="M1.5,0 V14" stroke="#9a9a9a" stroke-dasharray="1,1"/><path d="M1,14.5 H15.5 V8" fill="none" stroke="#9a9a9a"/><rect x="2" y="1" width="12" height="8" fill="#9a9a9a"/><path d="M3,11.5 H14" stroke="#9a9a9a" stroke-dasharray="1,2"/></svg>
<svg style="left:1336px;top:435px" width="16" height="15" shape-rendering="crispEdges"><path d="M1.5,0 V14" stroke="#9a9a9a" stroke-dasharray="1,1"/><path d="M1,14.5 H15.5 V8" fill="none" stroke="#9a9a9a"/><rect x="2" y="1" width="12" height="8" fill="#9a9a9a"/><path d="M3,11.5 H14" stroke="#9a9a9a" stroke-dasharray="1,2"/></svg>
<svg style="left:1336px;top:456px" width="16" height="15" shape-rendering="crispEdges"><path d="M1.5,0 V14" stroke="#9a9a9a" stroke-dasharray="1,1"/><path d="M1,14.5 H15.5 V8" fill="none" stroke="#9a9a9a"/><rect x="2" y="1" width="13" height="6" fill="#9a9a9a"/><text x="5" y="13.5" font-size="6" font-family="Liberation Sans" fill="#9a9a9a">AG</text></svg>
<svg style="left:1336px;top:476px" width="16" height="15" shape-rendering="crispEdges"><path d="M1.5,0 V14" stroke="#9a9a9a" stroke-dasharray="1,1"/><path d="M1,14.5 H15.5 V8" fill="none" stroke="#9a9a9a"/><rect x="2.5" y="1.5" width="10" height="7" fill="none" stroke="#9a9a9a"/><path d="M4,8 L11,2" stroke="#9a9a9a"/><path d="M13.5,1 V9" stroke="#9a9a9a" stroke-dasharray="1,1"/><text x="5" y="14" font-size="6" font-family="Liberation Sans" fill="#9a9a9a">AG</text></svg>
<div style="left:0px;top:491px;width:1296px;height:1px;background:#696969"></div>
<div style="left:-4px;top:491px;width:231px;height:24px;background:#f0f0f0;border:2px solid #000;border-top:none;border-radius:0 0 4px 0"></div>
<svg style="left:0;top:495px" width="15" height="17"><path d="M-2,0.5 H8.5 L13.5,5.5 V15.5 H-2" fill="#fff" stroke="#000" stroke-width="1.2"/><path d="M8.5,0.5 V5.5 H13.5" fill="none" stroke="#000"/><path d="M0.5,3 V15 M6.5,4 V11.5 H5 M6.5,4 H8" stroke="#f00" stroke-width="1.2" fill="none"/><rect x="2.5" y="2.5" width="2.5" height="3" fill="#fff" stroke="#000"/><path d="M1,9 L4,12 M4,9 L1,12" stroke="#000" stroke-width="1.2"/></svg>
<div class="t" style="left:18px;top:496px;transform:scaleX(1.0355);">Резистор и конденсатор в первичке *</div>
<div style="left:1297px;top:497px;width:16px;height:18px;border:1px solid #a0a0a0;background:#f0f0f0"></div>
<div style="left:1313px;top:497px;width:15px;height:18px;border:1px solid #a0a0a0;background:#f0f0f0"></div>
<svg style="left:0;top:0" width="1" height="1"><path d="M1302,501 L1308,506 L1302,511 Z" fill="#00008b"/><rect x="1316.5" y="502.5" width="6" height="5" fill="none" stroke="#00008b" stroke-width="1.5"/><rect x="1319.5" y="505.5" width="6" height="5" fill="#f0f0f0" stroke="#00008b" stroke-width="1.5"/></svg>
<div style="left:1331px;top:499px;width:24px;height:1px;background:#a0a0a0"></div>
<div style="left:1331px;top:514px;width:24px;height:1px;background:#a0a0a0"></div>
<svg style="left:1342px;top:503px" width="10" height="10"><path d="M1,1 L4.5,4 L8,1 M1,5 L4.5,8 L8,5" stroke="#000" stroke-width="1.6" fill="none"/></svg>
<div style="left:0px;top:519px;width:1355px;height:1px;background:#a0a0a0"></div>
<div style="left:0px;top:520px;width:1355px;height:1px;background:#fff"></div>
<div style="left:0px;top:523px;width:9px;height:12px;border:1px solid #7a7a7a;border-left:none;background:#f0f0f0"></div>
<svg style="left:0;top:525px" width="9" height="9"><path d="M1,2 L6,7 M6,2 L1,7" stroke="#000" stroke-width="1.8"/></svg>
<div style="left:0px;top:537px;width:9px;height:13px;border:1px solid #b0b0b0;border-left:none;background:#e8e8e8"></div>
<svg style="left:0;top:539px" width="9" height="9"><path d="M2,1 L6,4.5 L2,8" fill="#9a9a9a"/></svg>
<div style="left:0px;top:555px;width:11px;height:140px;background:linear-gradient(90deg,#c4d5e8,#d8e4f0)"></div>
<div class="t" style="left:-67px;top:632px;width:140px;transform:rotate(-90deg);transform-origin:50% 50%;text-align:center;color:#3a4656;font-size:12.5px">Блок информации</div>
<div style="left:16px;top:527px;width:1333px;height:144px;background:#fff;border:1px solid #828790;border-right-color:#d8d8d8;border-bottom-color:#d8d8d8;box-shadow:inset 1px 1px 0 #a0a0a0"></div>
<div class="t" style="left:24px;top:532px;transform:scaleX(1.2617);">------</div>
<div class="t" style="left:58px;top:532px;transform:scaleX(1.0048);">Проверка перечня соединений SPICE для Резистор и конденсатор в первичке - 24 февраля 2023 г., 11:19:16</div>
<div class="t" style="left:647px;top:532px;transform:scaleX(1.2182);">------</div>
<div class="t" style="left:24px;top:551px;transform:scaleX(1.1486);">=======</div>
<div class="t" style="left:83px;top:551px;transform:scaleX(1.0266);">Контроль SPICE перечня соединений завершен, 0 ошибок), 0 предупреждений</div>
<div class="t" style="left:521px;top:551px;transform:scaleX(1.1486);">=======</div>
<div style="left:16px;top:672px;width:1333px;height:1px;background:#696969"></div>
<div style="left:18px;top:673px;width:71px;height:20px;background:#f0f0f0;border-right:1px solid #696969;border-bottom:1px solid #696969;border-left:1px solid #fff;box-shadow:inset -1px -1px 0 #a0a0a0"></div>
<div class="t" style="left:22px;top:677px;transform:scaleX(1.0070);">Результаты</div>
<div style="left:89px;top:673px;width:42px;height:20px;background:#f0f0f0;border-right:1px solid #696969;border-bottom:1px solid #696969;border-left:1px solid #fff;box-shadow:inset -1px -1px 0 #a0a0a0"></div>
<div class="t" style="left:93px;top:677px;transform:scaleX(1.1610);">Цепи</div>
<div style="left:131px;top:673px;width:76px;height:20px;background:#f0f0f0;border-right:1px solid #696969;border-bottom:1px solid #696969;border-left:1px solid #fff;box-shadow:inset -1px -1px 0 #a0a0a0"></div>
<div class="t" style="left:135px;top:677px;transform:scaleX(0.9960);">Компоненты</div>
<div style="left:206px;top:673px;width:103px;height:20px;background:#f0f0f0;border-right:1px solid #696969;border-bottom:1px solid #696969;border-left:1px solid #fff;box-shadow:inset -1px -1px 0 #a0a0a0"></div>
<div class="t" style="left:210px;top:677px;transform:scaleX(0.9585);">Проводящий слой</div>
<div style="left:308px;top:671px;width:96px;height:25px;background:#f0f0f0;border-right:1px solid #696969;border-bottom:1px solid #696969;border-left:1px solid #fff;border-radius:0 0 3px 0"></div>
<div class="t" style="left:313px;top:679px;transform:scaleX(0.9993);">Моделирование</div>
<div style="left:0px;top:700px;width:1355px;height:1px;background:#a0a0a0"></div>
<div style="left:0px;top:701px;width:1355px;height:1px;background:#fff"></div>
<div style="left:0px;top:702px;width:1355px;height:1px;background:#a0a0a0"></div>
<div style="left:0px;top:703px;width:1355px;height:1px;background:#fff"></div>
<div style="left:0px;top:704px;width:1355px;height:16px;background:#f0eceb"></div>
<div style="left:0px;top:720px;width:1355px;height:1px;background:#fff"></div>
<div class="t" style="left:738px;top:705px;">-</div>
<div style="left:816px;top:703px;width:1px;height:17px;background:#c8c6c4"></div>
<div style="left:1055px;top:703px;width:1px;height:17px;background:#c8c6c4"></div>
<div class="t" style="left:821px;top:706px;transform:scaleX(1.0282);">Резистор и конденсатор в первичке: Моде</div>
<div class="t" style="left:1059px;top:706px;transform:scaleX(0.9908);">Время раб: 1.117 ms</div>
<div style="left:1297px;top:707px;width:6px;height:12px;background:#00f000;border-left:1px solid #404040;border-top:1px solid #404040"></div>
<div style="left:1305px;top:707px;width:6px;height:12px;background:#00f000;border-left:1px solid #404040;border-top:1px solid #404040"></div>
<div style="left:1313px;top:707px;width:6px;height:12px;background:#e6e6e6;border-left:1px solid #c8c8c8;border-top:1px solid #c8c8c8"></div>
<div style="left:1321px;top:707px;width:6px;height:12px;background:#e6e6e6;border-left:1px solid #c8c8c8;border-top:1px solid #c8c8c8"></div>
<div style="left:1329px;top:707px;width:6px;height:12px;background:#e6e6e6;border-left:1px solid #c8c8c8;border-top:1px solid #c8c8c8"></div>
<div style="left:1337px;top:707px;width:6px;height:12px;background:#00f000;border-left:1px solid #404040;border-top:1px solid #404040"></div>
<div style="left:1345px;top:707px;width:6px;height:12px;background:#00f000;border-left:1px solid #404040;border-top:1px solid #404040"></div>
<div style="left:1292px;top:703px;width:1px;height:17px;background:#c8c6c4"></div>
<div style="left:0px;top:721px;width:1355px;height:1px;background:#3a424c"></div>
<div style="left:0px;top:722px;width:1355px;height:11px;background:linear-gradient(90deg,#9fb2c8 0%,#93a7bd 17%,#8ea2b8 19%,#b2c6dc 24%,#aec2d8 40%,#b6cadf 60%,#a9bed5 75%,#9fb3ca 90%,#8c9fb5 98%,#b8c8d8 99%)"></div>
<div style="left:0px;top:722px;width:1355px;height:1px;background:rgba(220,232,244,0.6)"></div>
<svg style="left:0;top:721px" width="40" height="12"><circle cx="17" cy="19" r="17" fill="#5f84a6" stroke="#2c4a6a"/><circle cx="17" cy="19" r="14" fill="#8fb0c8"/><circle cx="16" cy="18" r="7" fill="#e0502a"/></svg>
<div style="left:45px;top:726px;width:140px;height:7px;background:#eeeeee"></div>
<div style="left:61px;top:729px;width:3px;height:4px;background:#3a8ae0"></div>
<div style="left:185px;top:726px;width:50px;height:7px;background:#1e88ff"></div>
<svg style="left:0;top:0" width="1" height="1"><ellipse cx="272" cy="738" rx="11" ry="10" fill="#4ab0e8"/><path d="M258,738 Q275,722 287,731" stroke="#f0c020" stroke-width="3" fill="none"/><rect x="318" y="731" width="26" height="4" fill="#c8d4e0" stroke="#8898a8"/><rect x="378" y="729" width="30" height="6" fill="#5aa0e0" stroke="#2a6ab0"/><path d="M455,726 L458,733 H452 Z" fill="#f08030"/><rect x="506" y="729" width="30" height="6" fill="#3a5a3a" stroke="#888"/></svg>
<div style="left:551px;top:722px;width:58px;height:11px;border:1px solid #56677c;border-bottom:none;border-radius:3px 3px 0 0;background:linear-gradient(#eef3f8,#d2dfec)"></div>
<div style="left:612px;top:722px;width:59px;height:11px;border:1px solid #56677c;border-bottom:none;border-radius:3px 3px 0 0;background:linear-gradient(#eef3f8,#d2dfec)"></div>
<div style="left:736px;top:722px;width:59px;height:11px;border:1px solid #56677c;border-bottom:none;border-radius:3px 3px 0 0;background:linear-gradient(#eef3f8,#d2dfec)"></div>
<svg style="left:0;top:0" width="1" height="1"><circle cx="580" cy="738" r="12" fill="#e53e30"/><rect x="627" y="727" width="28" height="8" rx="3" fill="#7266a0"/><rect x="630" y="729" width="20" height="1" fill="#c8c0e8"/><rect x="690" y="728" width="30" height="6" fill="#e8c860"/><rect x="695" y="726" width="6" height="3" fill="#30a030"/><rect x="700" y="728" width="4" height="5" fill="#e04030"/><ellipse cx="768" cy="738" rx="16" ry="10" fill="#8a70c8"/><ellipse cx="768" cy="738" rx="10" ry="6" fill="#b8a8e8"/></svg>
<div style="left:1342px;top:722px;width:1px;height:11px;background:#6a7a8c"></div>
<div style="left:1343px;top:722px;width:12px;height:11px;background:linear-gradient(90deg,#a8b8c8,#8898a8)"></div>
<div class="t" style="left:1291px;top:726px;color:#f4f4f4;font-size:12px;-webkit-text-stroke:0;">11:10</div>
<div style="left:707px;top:189px;width:589px;height:451px;border:1px solid #5f6b78;border-radius:6px 6px 4px 4px;background:linear-gradient(90deg,#dbe4ee,#e3eaf2 40%,#dae3ed 70%,#dfe7f0);box-shadow:inset 0 0 0 1px #f4f7fa,0 3px 10px 2px rgba(0,0,0,0.35)"></div>
<div class="t" style="left:715px;top:197px;transform:scaleX(0.9909);">Осциллограф-XSC1</div>
<div style="left:1242px;top:189px;width:47px;height:19px;border:1px solid #8f9aa8;border-top:none;border-radius:0 0 4px 4px;background:linear-gradient(#e2e9f1,#d3dde8)"></div>
<svg style="left:1258px;top:192px" width="16" height="14"><path d="M4.5,3.5 L11.5,10.5 M11.5,3.5 L4.5,10.5" stroke="#4a5260" stroke-width="4.2" stroke-linecap="round"/><path d="M4.5,3.5 L11.5,10.5 M11.5,3.5 L4.5,10.5" stroke="#f4f6f8" stroke-width="2" stroke-linecap="round"/></svg>
<div style="left:714px;top:218px;width:574px;height:416px;background:#f0f0f0;border:1px solid #8a95a2"></div>
<div style="left:714px;top:218px;width:575px;height:250px;background:#6d6d6d"></div>
<div style="left:716px;top:220px;width:573px;height:248px;background:#a8a8a8"></div>
<div style="left:718px;top:221px;width:569px;height:246px;background:#fff"></div>
<div style="left:718px;top:221px;width:568px;height:245px;background:#000"></div>
<svg style="left:0;top:0" width="1" height="1" shape-rendering="crispEdges"><rect x="726.5" y="230.5" width="551" height="229" fill="none" stroke="#fff" stroke-width="1"/><line x1="781.5" y1="234" x2="781.5" y2="459" stroke="#c4c4c4" stroke-dasharray="3,3"/><line x1="836.5" y1="234" x2="836.5" y2="459" stroke="#c4c4c4" stroke-dasharray="3,3"/><line x1="891.5" y1="234" x2="891.5" y2="459" stroke="#c4c4c4" stroke-dasharray="3,3"/><line x1="946.5" y1="234" x2="946.5" y2="459" stroke="#c4c4c4" stroke-dasharray="3,3"/><line x1="1002.5" y1="234" x2="1002.5" y2="459" stroke="#c4c4c4" stroke-dasharray="3,3"/><line x1="1057.5" y1="234" x2="1057.5" y2="459" stroke="#c4c4c4" stroke-dasharray="3,3"/><line x1="1112.5" y1="234" x2="1112.5" y2="459" stroke="#c4c4c4" stroke-dasharray="3,3"/><line x1="1167.5" y1="234" x2="1167.5" y2="459" stroke="#c4c4c4" stroke-dasharray="3,3"/><line x1="1222.5" y1="234" x2="1222.5" y2="459" stroke="#c4c4c4" stroke-dasharray="3,3"/><line x1="728" y1="268.5" x2="1277" y2="268.5" stroke="#c4c4c4" stroke-dasharray="3,3"/><line x1="728" y1="306.5" x2="1277" y2="306.5" stroke="#c4c4c4" stroke-dasharray="3,3"/><line x1="728" y1="383.5" x2="1277" y2="383.5" stroke="#c4c4c4" stroke-dasharray="3,3"/><line x1="728" y1="421.5" x2="1277" y2="421.5" stroke="#c4c4c4" stroke-dasharray="3,3"/><rect x="727" y="345" width="550" height="1" fill="#fff"/><rect x="726" y="231" width="1" height="229" fill="#00ff00"/><rect x="737" y="231" width="1" height="70" fill="#ff0000"/><path d="M718,222 H736 L734,224 H720 Z" fill="#00ffff"/><path d="M719.5,224 H734 L726.8,231 Z" fill="#ff00ff"/><rect x="725" y="223" width="2" height="6" fill="#000"/><rect x="725" y="224" width="2" height="1" fill="#ffff00"/><rect x="725" y="226" width="1" height="1" fill="#ffff00"/><rect x="725" y="228" width="3" height="1" fill="#00ffff"/></svg>
<svg style="left:0;top:0" width="1" height="1" shape-rendering="crispEdges"><rect x="727" y="346" width="1" height="1" fill="#bbb"/><rect x="730" y="344" width="1" height="1" fill="#999"/><rect x="733" y="344" width="1" height="1" fill="#999"/><rect x="742" y="346" width="1" height="1" fill="#bbb"/><rect x="745" y="346" width="1" height="1" fill="#bbb"/><rect x="751" y="346" width="1" height="1" fill="#bbb"/><rect x="754" y="346" width="1" height="1" fill="#bbb"/><rect x="760" y="344" width="1" height="1" fill="#999"/><rect x="766" y="344" width="1" height="1" fill="#999"/><rect x="772" y="346" width="1" height="1" fill="#bbb"/><rect x="781" y="344" width="1" height="1" fill="#999"/><rect x="790" y="346" width="1" height="1" fill="#bbb"/><rect x="799" y="346" width="1" height="1" fill="#bbb"/><rect x="802" y="346" width="1" height="1" fill="#bbb"/><rect x="808" y="344" width="1" height="1" fill="#999"/><rect x="823" y="344" width="1" height="1" fill="#999"/><rect x="829" y="344" width="1" height="1" fill="#999"/><rect x="838" y="346" width="1" height="1" fill="#bbb"/><rect x="841" y="346" width="1" height="1" fill="#bbb"/><rect x="844" y="346" width="1" height="1" fill="#bbb"/><rect x="850" y="344" width="1" height="1" fill="#999"/><rect x="856" y="346" width="1" height="1" fill="#bbb"/><rect x="859" y="344" width="1" height="1" fill="#999"/><rect x="862" y="344" width="1" height="1" fill="#999"/><rect x="865" y="344" width="1" height="1" fill="#999"/><rect x="892" y="346" width="1" height="1" fill="#bbb"/><rect x="910" y="346" width="1" height="1" fill="#bbb"/><rect x="919" y="346" width="1" height="1" fill="#bbb"/><rect x="922" y="346" width="1" height="1" fill="#bbb"/><rect x="931" y="346" width="1" height="1" fill="#bbb"/><rect x="937" y="344" width="1" height="1" fill="#999"/><rect x="940" y="346" width="1" height="1" fill="#bbb"/><rect x="943" y="346" width="1" height="1" fill="#bbb"/><rect x="952" y="346" width="1" height="1" fill="#bbb"/><rect x="958" y="346" width="1" height="1" fill="#bbb"/><rect x="964" y="346" width="1" height="1" fill="#bbb"/><rect x="973" y="344" width="1" height="1" fill="#999"/><rect x="979" y="346" width="1" height="1" fill="#bbb"/><rect x="982" y="346" width="1" height="1" fill="#bbb"/><rect x="988" y="346" width="1" height="1" fill="#bbb"/><rect x="991" y="346" width="1" height="1" fill="#bbb"/><rect x="994" y="344" width="1" height="1" fill="#999"/><rect x="1000" y="346" width="1" height="1" fill="#bbb"/><rect x="1003" y="346" width="1" height="1" fill="#bbb"/><rect x="1009" y="346" width="1" height="1" fill="#bbb"/><rect x="1018" y="344" width="1" height="1" fill="#999"/><rect x="1021" y="344" width="1" height="1" fill="#999"/><rect x="1024" y="344" width="1" height="1" fill="#999"/><rect x="1042" y="344" width="1" height="1" fill="#999"/><rect x="1045" y="344" width="1" height="1" fill="#999"/><rect x="1051" y="346" width="1" height="1" fill="#bbb"/><rect x="1054" y="346" width="1" height="1" fill="#bbb"/><rect x="1060" y="344" width="1" height="1" fill="#999"/><rect x="1063" y="344" width="1" height="1" fill="#999"/><rect x="1066" y="346" width="1" height="1" fill="#bbb"/><rect x="1069" y="344" width="1" height="1" fill="#999"/><rect x="1075" y="346" width="1" height="1" fill="#bbb"/><rect x="1084" y="346" width="1" height="1" fill="#bbb"/><rect x="1090" y="344" width="1" height="1" fill="#999"/><rect x="1096" y="344" width="1" height="1" fill="#999"/><rect x="1105" y="346" width="1" height="1" fill="#bbb"/><rect x="1108" y="346" width="1" height="1" fill="#bbb"/><rect x="1117" y="346" width="1" height="1" fill="#bbb"/><rect x="1120" y="344" width="1" height="1" fill="#999"/><rect x="1126" y="346" width="1" height="1" fill="#bbb"/><rect x="1129" y="344" width="1" height="1" fill="#999"/><rect x="1132" y="346" width="1" height="1" fill="#bbb"/><rect x="1135" y="344" width="1" height="1" fill="#999"/><rect x="1141" y="346" width="1" height="1" fill="#bbb"/><rect x="1144" y="344" width="1" height="1" fill="#999"/><rect x="1150" y="346" width="1" height="1" fill="#bbb"/><rect x="1159" y="346" width="1" height="1" fill="#bbb"/><rect x="1162" y="346" width="1" height="1" fill="#bbb"/><rect x="1168" y="346" width="1" height="1" fill="#bbb"/><rect x="1171" y="346" width="1" height="1" fill="#bbb"/><rect x="1174" y="344" width="1" height="1" fill="#999"/><rect x="1180" y="346" width="1" height="1" fill="#bbb"/><rect x="1183" y="346" width="1" height="1" fill="#bbb"/><rect x="1186" y="346" width="1" height="1" fill="#bbb"/><rect x="1192" y="344" width="1" height="1" fill="#999"/><rect x="1198" y="346" width="1" height="1" fill="#bbb"/><rect x="1201" y="346" width="1" height="1" fill="#bbb"/><rect x="1210" y="344" width="1" height="1" fill="#999"/><rect x="1213" y="346" width="1" height="1" fill="#bbb"/><rect x="1216" y="346" width="1" height="1" fill="#bbb"/><rect x="1219" y="344" width="1" height="1" fill="#999"/><rect x="1222" y="346" width="1" height="1" fill="#bbb"/><rect x="1231" y="346" width="1" height="1" fill="#bbb"/><rect x="1234" y="346" width="1" height="1" fill="#bbb"/><rect x="1246" y="346" width="1" height="1" fill="#bbb"/><rect x="1249" y="346" width="1" height="1" fill="#bbb"/><rect x="1252" y="346" width="1" height="1" fill="#bbb"/><rect x="1258" y="346" width="1" height="1" fill="#bbb"/><rect x="1261" y="346" width="1" height="1" fill="#bbb"/><rect x="1264" y="344" width="1" height="1" fill="#999"/><rect x="1267" y="344" width="1" height="1" fill="#999"/><rect x="1270" y="344" width="1" height="1" fill="#999"/><rect x="1276" y="346" width="1" height="1" fill="#bbb"/></svg>
<div style="left:716px;top:470px;width:571px;height:13px;background:#f0f0f0"></div>
<div style="left:732px;top:471px;width:535px;height:11px;border:1px solid #9a9a9a;border-radius:2px;background:linear-gradient(#f4f4f4,#dcdcdc)"></div>
<svg style="left:0;top:0" width="1" height="1"><path d="M725,473 L721,476.5 L725,480 Z" fill="#555"/><path d="M1278,473 L1282,476.5 L1278,480 Z" fill="#555"/><rect x="995" y="473" width="1" height="7" fill="#777"/><rect x="997" y="473" width="1" height="7" fill="#777"/><rect x="999" y="473" width="1" height="7" fill="#777"/></svg>
<div style="left:716px;top:487px;width:57px;height:59px;border:1px solid #a0a0a0;border-right-color:#fff;border-bottom-color:#fff"></div>
<div style="left:773px;top:487px;width:358px;height:59px;background:#fff;border-top:2px solid #6d6d6d;border-left:2px solid #6d6d6d"></div>
<div class="t" style="left:721px;top:495px;transform:scaleX(0.8941);">T1</div>
<div class="t" style="left:721px;top:509px;transform:scaleX(0.8941);">T2</div>
<div class="t" style="left:721px;top:529px;transform:scaleX(0.9129);">T2-T1</div>
<div style="left:741px;top:494px;width:13px;height:15px;border:1px solid #7a7a7a;border-radius:3px;background:linear-gradient(#fafafa 0%,#ededed 50%,#d6d6d6 51%,#d0d0d0 100%);box-shadow:inset 0 0 0 1px #fff"></div>
<svg style="left:741px;top:494px" width="13" height="15"><path d="M2.5,7.5 L7,3.0 V6.0 H12.5 V9.0 H7 V12.0 Z" fill="#000"/></svg>
<div style="left:758px;top:494px;width:13px;height:15px;border:1px solid #7a7a7a;border-radius:3px;background:linear-gradient(#fafafa 0%,#ededed 50%,#d6d6d6 51%,#d0d0d0 100%);box-shadow:inset 0 0 0 1px #fff"></div>
<svg style="left:758px;top:494px" width="13" height="15"><path d="M10.5,7.5 L6,3.0 V6.0 H0.5 V9.0 H6 V12.0 Z" fill="#000"/></svg>
<div style="left:741px;top:512px;width:13px;height:14px;border:1px solid #7a7a7a;border-radius:3px;background:linear-gradient(#fafafa 0%,#ededed 50%,#d6d6d6 51%,#d0d0d0 100%);box-shadow:inset 0 0 0 1px #fff"></div>
<svg style="left:741px;top:512px" width="13" height="14"><path d="M2.5,7.0 L7,2.5 V5.5 H12.5 V8.5 H7 V11.5 Z" fill="#000"/></svg>
<div style="left:758px;top:512px;width:13px;height:14px;border:1px solid #7a7a7a;border-radius:3px;background:linear-gradient(#fafafa 0%,#ededed 50%,#d6d6d6 51%,#d0d0d0 100%);box-shadow:inset 0 0 0 1px #fff"></div>
<svg style="left:758px;top:512px" width="13" height="14"><path d="M10.5,7.0 L6,2.5 V5.5 H0.5 V8.5 H6 V11.5 Z" fill="#000"/></svg>
<div class="t" style="left:791px;top:489px;transform:scaleX(0.9246);">Время</div>
<div class="t" style="left:791px;top:502px;transform:scaleX(0.9540);">0.000 s</div>
<div class="t" style="left:872px;top:502px;transform:scaleX(0.9330);">0.000 V</div>
<div class="t" style="left:952px;top:502px;transform:scaleX(0.9330);">0.000 V</div>
<div class="t" style="left:791px;top:515px;transform:scaleX(0.9540);">0.000 s</div>
<div class="t" style="left:872px;top:515px;transform:scaleX(0.9330);">0.000 V</div>
<div class="t" style="left:952px;top:515px;transform:scaleX(0.9330);">0.000 V</div>
<div class="t" style="left:791px;top:528px;transform:scaleX(0.9540);">0.000 s</div>
<div class="t" style="left:872px;top:528px;transform:scaleX(0.9330);">0.000 V</div>
<div class="t" style="left:952px;top:528px;transform:scaleX(0.9330);">0.000 V</div>
<div class="t" style="left:865px;top:489px;transform:scaleX(0.9651);">Канал_A</div>
<div class="t" style="left:945px;top:489px;transform:scaleX(0.9223);">Канал_B</div>
<div style="left:1139px;top:494px;width:61px;height:21px;border:1px solid #707070;background:linear-gradient(#f2f2f2 0%,#ebebeb 45%,#dddddd 55%,#cfcfcf 100%);border-radius:3px"></div>
<div class="t" style="left:1139px;top:497px;width:61px;text-align:center;color:#000">Экран</div>
<div style="left:1139px;top:522px;width:61px;height:21px;border:1px solid #707070;background:linear-gradient(#f2f2f2 0%,#ebebeb 45%,#dddddd 55%,#cfcfcf 100%);border-radius:3px"></div>
<div class="t" style="left:1139px;top:525px;width:61px;text-align:center;color:#000">Сохранить</div>
<div class="t" style="left:1208px;top:535px;transform:scaleX(0.9081);">Внешняя</div>
<svg style="left:0;top:0" width="1" height="1"><circle cx="1264" cy="543.5" r="5.5" fill="#f4f4f4" stroke="#c4c4c4"/></svg>
<div style="left:717px;top:560px;width:132px;height:72px;border:1px solid #d5dfe5;border-radius:3px"></div>
<div style="left:721px;top:553px;width:58px;height:14px;background:#f0f0f0"></div>
<div class="t" style="left:724px;top:553px;transform:scaleX(0.9577);">Развертка</div>
<div style="left:851px;top:560px;width:127px;height:72px;border:1px solid #d5dfe5;border-radius:3px"></div>
<div style="left:855px;top:553px;width:48px;height:14px;background:#f0f0f0"></div>
<div class="t" style="left:858px;top:553px;transform:scaleX(0.9673);">Канал A</div>
<div style="left:980px;top:560px;width:129px;height:72px;border:1px solid #d5dfe5;border-radius:3px"></div>
<div style="left:985px;top:553px;width:45px;height:14px;background:#f0f0f0"></div>
<div class="t" style="left:988px;top:553px;transform:scaleX(0.8982);">Канал B</div>
<div style="left:1110px;top:560px;width:177px;height:72px;border:1px solid #d5dfe5;border-radius:3px"></div>
<div style="left:1115px;top:553px;width:83px;height:14px;background:#f0f0f0"></div>
<div class="t" style="left:1118px;top:553px;transform:scaleX(0.9242);">Синхронизация</div>
<div class="t" style="left:718px;top:571px;transform:scaleX(0.9603);">Шкала:</div>
<div style="left:762px;top:567px;width:82px;height:19px;background:#fff;border:1px solid #e2e3ea;border-top-color:#abadb3;border-radius:2px"></div>
<div class="t" style="left:767px;top:570px;">10 ms/Div</div>
<div class="t" style="left:718px;top:591px;transform:scaleX(0.9443);">задержка X</div>
<div style="left:783px;top:588px;width:61px;height:19px;background:#fff;border:1px solid #e2e3ea;border-top-color:#abadb3;border-radius:2px"></div>
<div class="t" style="left:788px;top:591px;">0</div>
<div style="left:723px;top:612px;width:25px;height:17px;border:1px solid #3c7fb1;background:linear-gradient(#dcf0fb 0%,#c4e5f6 45%,#98d1ef 55%,#6fbbe6 100%);border-radius:3px"></div>
<div class="t" style="left:723px;top:613px;width:25px;text-align:center;color:#000">Y/T</div>
<div style="left:751px;top:612px;width:26px;height:17px;border:1px solid #707070;background:linear-gradient(#f2f2f2 0%,#ebebeb 45%,#dddddd 55%,#cfcfcf 100%);border-radius:3px"></div>
<div class="t" style="left:751px;top:613px;width:26px;text-align:center;color:#000">Add</div>
<div style="left:780px;top:612px;width:27px;height:17px;border:1px solid #707070;background:linear-gradient(#f2f2f2 0%,#ebebeb 45%,#dddddd 55%,#cfcfcf 100%);border-radius:3px"></div>
<div class="t" style="left:780px;top:613px;width:27px;text-align:center;color:#000">B/A</div>
<div style="left:810px;top:612px;width:27px;height:17px;border:1px solid #707070;background:linear-gradient(#f2f2f2 0%,#ebebeb 45%,#dddddd 55%,#cfcfcf 100%);border-radius:3px"></div>
<div class="t" style="left:810px;top:613px;width:27px;text-align:center;color:#000">A/B</div>
<div class="t" style="left:853px;top:571px;transform:scaleX(0.9624);">Шкала</div>
<div style="left:893px;top:566px;width:83px;height:20px;background:#fff;border:1px solid #e2e3ea;border-top-color:#abadb3;border-radius:2px"></div>
<div class="t" style="left:898px;top:569px;">2 mV/Div</div>
<div class="t" style="left:853px;top:591px;transform:scaleX(0.8963);">смещение Y</div>
<div style="left:916px;top:588px;width:60px;height:19px;background:#fff;border:1px solid #e2e3ea;border-top-color:#abadb3;border-radius:2px"></div>
<div class="t" style="left:921px;top:591px;">0</div>
<div style="left:854px;top:612px;width:25px;height:17px;border:1px solid #707070;background:linear-gradient(#f2f2f2 0%,#ebebeb 45%,#dddddd 55%,#cfcfcf 100%);border-radius:3px"></div>
<div class="t" style="left:854px;top:613px;width:25px;text-align:center;color:#000">AC</div>
<div style="left:881px;top:612px;width:25px;height:17px;border:1px solid #707070;background:linear-gradient(#f2f2f2 0%,#ebebeb 45%,#dddddd 55%,#cfcfcf 100%);border-radius:3px"></div>
<div class="t" style="left:881px;top:613px;width:25px;text-align:center;color:#000">0</div>
<div style="left:908px;top:612px;width:25px;height:17px;border:1px solid #3c7fb1;background:linear-gradient(#dcf0fb 0%,#c4e5f6 45%,#98d1ef 55%,#6fbbe6 100%);border-radius:3px"></div>
<div class="t" style="left:908px;top:613px;width:25px;text-align:center;color:#000">DC</div>
<svg style="left:0;top:0" width="1" height="1"><circle cx="964" cy="619" r="5.5" fill="#e8e8e8" stroke="#b0b0b0"/><circle cx="964" cy="619" r="3" fill="#b8b8b8"/></svg>
<div class="t" style="left:982px;top:571px;transform:scaleX(0.9624);">Шкала</div>
<div style="left:1023px;top:567px;width:83px;height:19px;background:#fff;border:1px solid #e2e3ea;border-top-color:#abadb3;border-radius:2px"></div>
<div class="t" style="left:1028px;top:570px;">2 mV/Div</div>
<div class="t" style="left:982px;top:591px;transform:scaleX(0.8963);">смещение Y</div>
<div style="left:1047px;top:588px;width:59px;height:18px;background:#fff;border:1px solid #e2e3ea;border-top-color:#abadb3;border-radius:2px"></div>
<div class="t" style="left:1052px;top:591px;">0</div>
<div style="left:984px;top:613px;width:24px;height:17px;border:1px solid #707070;background:linear-gradient(#f2f2f2 0%,#ebebeb 45%,#dddddd 55%,#cfcfcf 100%);border-radius:3px"></div>
<div class="t" style="left:984px;top:614px;width:24px;text-align:center;color:#000">AC</div>
<div style="left:1010px;top:613px;width:22px;height:17px;border:1px solid #707070;background:linear-gradient(#f2f2f2 0%,#ebebeb 45%,#dddddd 55%,#cfcfcf 100%);border-radius:3px"></div>
<div class="t" style="left:1010px;top:614px;width:22px;text-align:center;color:#000">0</div>
<div style="left:1034px;top:613px;width:25px;height:17px;border:1px solid #3c7fb1;background:linear-gradient(#dcf0fb 0%,#c4e5f6 45%,#98d1ef 55%,#6fbbe6 100%);border-radius:3px"></div>
<div class="t" style="left:1034px;top:614px;width:25px;text-align:center;color:#000">DC</div>
<div style="left:1061px;top:613px;width:19px;height:17px;border:1px solid #707070;background:linear-gradient(#f2f2f2 0%,#ebebeb 45%,#dddddd 55%,#cfcfcf 100%);border-radius:3px"></div>
<div class="t" style="left:1061px;top:614px;width:19px;text-align:center;color:#000">-</div>
<svg style="left:0;top:0" width="1" height="1"><circle cx="1098" cy="620" r="5.5" fill="#e8e8e8" stroke="#b0b0b0"/><circle cx="1098" cy="620" r="3" fill="#b8b8b8"/></svg>
<div class="t" style="left:1114px;top:571px;transform:scaleX(1.0560);">Запуск</div>
<div style="left:1172px;top:571px;width:16px;height:15px;border:1px solid #3c7fb1;background:linear-gradient(#dcf0fb 0%,#c4e5f6 45%,#98d1ef 55%,#6fbbe6 100%);border-radius:3px"></div>
<div style="left:1190px;top:571px;width:16px;height:15px;border:1px solid #707070;background:linear-gradient(#f2f2f2 0%,#ebebeb 45%,#dddddd 55%,#cfcfcf 100%);border-radius:3px"></div>
<svg style="left:0;top:0" width="1" height="1"><path d="M1175.5,582.5 H1179.5 V574.5 H1184.5 M1176,579 L1183,577" stroke="#000" fill="none"/><path d="M1193.5,574.5 H1197.5 V582.5 H1202.5 M1195,578 L1201,580" stroke="#000" fill="none"/></svg>
<div style="left:1211px;top:571px;width:17px;height:17px;border:1px solid #3c7fb1;background:linear-gradient(#dcf0fb 0%,#c4e5f6 45%,#98d1ef 55%,#6fbbe6 100%);border-radius:3px"></div>
<div class="t" style="left:1211px;top:572px;width:17px;text-align:center;color:#000">A</div>
<div style="left:1231px;top:571px;width:17px;height:17px;border:1px solid #c8c8c8;background:#f4f4f4;border-radius:3px"></div>
<div class="t" style="left:1231px;top:572px;width:17px;text-align:center;color:#9a9a9a">B</div>
<div style="left:1250px;top:571px;width:32px;height:17px;border:1px solid #c8c8c8;background:#f4f4f4;border-radius:3px"></div>
<div class="t" style="left:1250px;top:572px;width:32px;text-align:center;color:#9a9a9a">Внеш</div>
<div class="t" style="left:1114px;top:591px;transform:scaleX(0.9929);">Уровень</div>
<div style="left:1171px;top:591px;width:78px;height:18px;background:#fff;border:1px solid #e2e3ea;border-top-color:#abadb3;border-radius:2px"></div>
<div class="t" style="left:1177px;top:594px;">0</div>
<div style="left:1251px;top:591px;width:31px;height:18px;background:#fff;border:1px solid #e2e3ea;border-top-color:#abadb3;border-radius:2px"></div>
<div class="t" style="left:1257px;top:593px;">V</div>
<div style="left:1115px;top:611px;width:41px;height:18px;border:1px solid #707070;background:linear-gradient(#f2f2f2 0%,#ebebeb 45%,#dddddd 55%,#cfcfcf 100%);border-radius:3px"></div>
<div class="t" style="left:1115px;top:613px;width:41px;text-align:center;color:#000">Одн.</div>
<div style="left:1158px;top:611px;width:46px;height:18px;border:1px solid #707070;background:linear-gradient(#f2f2f2 0%,#ebebeb 45%,#dddddd 55%,#cfcfcf 100%);border-radius:3px"></div>
<div class="t" style="left:1158px;top:613px;width:46px;text-align:center;color:#000">Норм</div>
<div style="left:1206px;top:611px;width:37px;height:18px;border:1px solid #707070;background:linear-gradient(#f2f2f2 0%,#ebebeb 45%,#dddddd 55%,#cfcfcf 100%);border-radius:3px"></div>
<div class="t" style="left:1206px;top:613px;width:37px;text-align:center;color:#000">Авто</div>
<div style="left:1245px;top:611px;width:37px;height:18px;border:1px solid #3c7fb1;background:linear-gradient(#dcf0fb 0%,#c4e5f6 45%,#98d1ef 55%,#6fbbe6 100%);border-radius:3px"></div>
<div class="t" style="left:1245px;top:613px;width:37px;text-align:center;color:#000">Нет</div>
<svg style="left:0;top:0" width="1" height="1" shape-rendering="crispEdges"><rect x="1285" y="622" width="1" height="2" fill="#b0b0b0"/><rect x="1285" y="625" width="1" height="2" fill="#b0b0b0"/><rect x="1285" y="628" width="1" height="2" fill="#b0b0b0"/><rect x="1277" y="630" width="2" height="1" fill="#b0b0b0"/><rect x="1280" y="630" width="2" height="1" fill="#b0b0b0"/><rect x="1283" y="630" width="2" height="1" fill="#b0b0b0"/></svg>
<div style="left:331px;top:286px;width:685px;height:141px;border:1px solid #3a4450;border-radius:6px 6px 7px 7px;background:linear-gradient(100deg,#dae5f0 0%,#cfdcea 10%,#b9cde3 20%,#c2d4e8 30%,#b0c6de 42%,#bdd1e6 55%,#b4c9e0 68%,#c6d7ea 82%,#bccfe5 100%);box-shadow:inset 0 0 0 1px rgba(255,255,255,0.75),0 4px 12px 3px rgba(0,0,0,0.55)"></div>
<div style="left:332px;top:340px;width:6px;height:81px;background:linear-gradient(#b9cee3,#d3e1ee)"></div>
<div style="left:1009px;top:340px;width:6px;height:81px;background:linear-gradient(#b9cee3,#d3e1ee)"></div>
<div style="left:336px;top:421px;width:675px;height:5px;background:linear-gradient(90deg,#c9d9ea,#dce7f2,#c9d9ea)"></div>
<div class="t" style="left:339px;top:294px;transform:scaleX(1.0450);">Ошибка моделирования</div>
<div style="left:963px;top:287px;width:47px;height:19px;border:1px solid #5a2a24;border-top:none;border-radius:0 0 4px 4px;background:linear-gradient(#e8a493 0%,#d7705a 45%,#c23a23 55%,#cf5a3e 100%);box-shadow:inset 0 0 0 1px rgba(255,220,210,0.5)"></div>
<svg style="left:979px;top:290px" width="16" height="13"><path d="M4.5,3 L11.5,10 M11.5,3 L4.5,10" stroke="#4a1a14" stroke-width="4.4" stroke-linecap="round"/><path d="M4.5,3 L11.5,10 M11.5,3 L4.5,10" stroke="#f8f8f8" stroke-width="2.2" stroke-linecap="round"/></svg>
<div style="left:338px;top:315px;width:672px;height:106px;background:#f0f0f0;border:1px solid #6d7580"></div>
<div class="t" style="left:365px;top:329px;transform:scaleX(0.9563);">Произошла ошибка моделирования.  Хотите запустить Помощника сходимости для попытки автоматического решения</div>
<div class="t" style="left:365px;top:342px;transform:scaleX(0.9051);">проблемы?</div>
<div style="left:594px;top:393px;width:73px;height:20px;border:1px solid #3c7fb1;border-radius:3px;background:linear-gradient(#f0f6fa 0%,#e6eff6 45%,#d2e2ee 55%,#c6daea 100%);box-shadow:inset 0 0 0 1px #5fd4fa"></div>
<div class="t" style="left:594px;top:396px;width:73px;text-align:center">Да</div>
<div style="left:675px;top:393px;width:73px;height:20px;border:1px solid #707070;border-radius:3px;background:linear-gradient(#f2f2f2 0%,#ebebeb 45%,#dddddd 55%,#cfcfcf 100%);box-shadow:inset 0 0 0 1px #fcfcfc"></div>
<div class="t" style="left:675px;top:396px;width:73px;text-align:center">Нет</div>
<svg style="left:0;top:0" width="1" height="1" shape-rendering="crispEdges"><rect x="1006" y="417" width="1" height="1" fill="#a0a0a0"/><rect x="1006" y="415" width="1" height="1" fill="#a0a0a0"/><rect x="1006" y="413" width="1" height="1" fill="#a0a0a0"/><rect x="1004" y="417" width="1" height="1" fill="#a0a0a0"/><rect x="1004" y="415" width="1" height="1" fill="#a0a0a0"/><rect x="1002" y="417" width="1" height="1" fill="#a0a0a0"/></svg></body></html>
